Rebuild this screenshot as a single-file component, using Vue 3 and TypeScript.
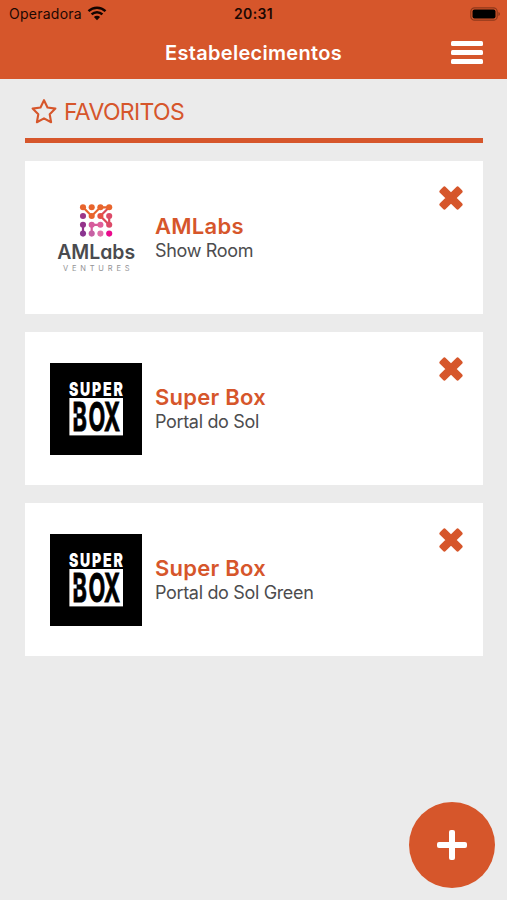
<script setup lang="ts">
interface Place {
  id: number
  name: string
  unit: string
  logo: 'amlabs' | 'superbox'
}

interface Dot {
  x: number
  y: number
  color: string
}

const places: Place[] = [
  { id: 1, name: 'AMLabs', unit: 'Show Room', logo: 'amlabs' },
  { id: 2, name: 'Super Box', unit: 'Portal do Sol', logo: 'superbox' },
  { id: 3, name: 'Super Box', unit: 'Portal do Sol Green', logo: 'superbox' },
]

const dotColors: string[][] = [
  ['#e8642c', '#e8642c', '#e8662e', '#e8642c'],
  ['#9c3687', '#e8642c', '#e55146', '#dc4a68'],
  ['#94338a', '#d65c9c', '#e0609a', '#dc4a68'],
  ['#8a3590', '#c660a4', '#e070a8', '#ea0a8c'],
]
const columns = [33, 41.7, 50.4, 59.2]
const rows = [15.3, 24, 32.8, 41.6]
const dots: Dot[] = dotColors.flatMap((line, r) =>
  line.map((color, c) => ({ x: columns[c], y: rows[r], color })),
)
</script>

<template>
  <div class="screen">
    <header class="header">
      <div class="status">
        <div class="carrier">
          <span>Operadora</span>
          <svg class="wifi" viewBox="0 0 20 15" width="20" height="15">
            <path d="M1.5 5.2a12.2 12.2 0 0 1 17 0" />
            <path d="M4.6 8.4a7.7 7.7 0 0 1 10.8 0" />
            <path class="solid" d="M10 14.2 6.9 11a4.4 4.4 0 0 1 6.2 0z" />
          </svg>
        </div>
        <span class="clock">20:31</span>
        <svg class="battery" viewBox="0 0 31 14" width="31" height="14">
          <rect class="shell" x="0.8" y="0.8" width="26.4" height="12.4" rx="3.8" />
          <rect x="2.5" y="2.5" width="23" height="9" rx="2" />
          <path class="tip" d="M28.4 5v4q1.6-.6 1.6-2t-1.6-2z" />
        </svg>
      </div>
      <div class="nav">
        <h1>Estabelecimentos</h1>
        <button class="menu" aria-label="Menu"><i /><i /><i /></button>
      </div>
    </header>

    <main>
      <h2 class="section">
        <svg viewBox="0 0 28 27" width="28" height="27">
          <path d="M14 2.2 17.5 9.5 25.4 10.6 19.7 16.2 21.1 24.2 14 20.4 6.9 24.2 8.3 16.2 2.6 10.6 10.5 9.5z" />
        </svg>
        <span>FAVORITOS</span>
      </h2>

      <article v-for="place in places" :key="place.id" class="card">
        <svg v-if="place.logo === 'amlabs'" class="logo" viewBox="0 0 92 92">
          <g class="links">
            <path stroke="#e8642c" d="M33 15.3 41.7 24 50.4 15.3H59.2" />
            <path stroke="#dc4a58" d="M59.2 15.3 50.4 24 59.2 32.8V24" />
            <path stroke="#d65c9c" d="M41.7 41.6V32.8H50.4" />
            <path stroke="#94338a" d="M33 32.8V41.6" />
          </g>
          <circle v-for="(dot, i) in dots" :key="i" :cx="dot.x" :cy="dot.y" r="3.05" :fill="dot.color" />
          <text class="am" x="7.2" y="66.5" textLength="78" lengthAdjust="spacingAndGlyphs">AMLabs</text>
          <text class="ventures" x="13" y="79.2" textLength="66.5">VENTURES</text>
        </svg>
        <svg v-else class="logo" viewBox="0 0 92 92">
          <rect width="92" height="92" fill="#000" />
          <text class="super" transform="translate(18.9 32.6) scale(0.74 1)" textLength="73">SUPER</text>
          <rect x="19.4" y="35" width="53.6" height="37.4" fill="#fff" />
          <text class="box" transform="translate(22.6 68.3) scale(0.55 1)" x="0 29 57">BOX</text>
          <rect x="22.6" y="50.5" width="4" height="4" fill="#fff" />
        </svg>
        <div class="info">
          <h3>{{ place.name }}</h3>
          <p>{{ place.unit }}</p>
        </div>
        <button class="remove" aria-label="Remover">
          <svg viewBox="0 0 24 24" width="24" height="24">
            <path d="M2.2 5.4 5.4 2.2 12 8.8 18.6 2.2 21.8 5.4 15.2 12 21.8 18.6 18.6 21.8 12 15.2 5.4 21.8 2.2 18.6 8.8 12z" />
          </svg>
        </button>
      </article>
    </main>

    <button class="add" aria-label="Adicionar">
      <svg viewBox="0 0 32 32" width="32" height="32">
        <rect x="13" y="1" width="6" height="30" rx="2" />
        <rect x="1" y="13" width="30" height="6" rx="2" />
      </svg>
    </button>
  </div>
</template>

<style>
body {
  margin: 0;
}
</style>

<style scoped>
.screen {
  position: relative;
  box-sizing: border-box;
  width: 100%;
  height: 900px;
  overflow: hidden;
  background: #ebebeb;
  color: #4c4c4e;
  font-family: Inter, 'Liberation Sans', sans-serif;
}

h1,
h2,
h3,
p {
  margin: 0;
}

button {
  padding: 0;
  border: 0;
  background: none;
}

.header {
  height: 79px;
  background: #d6562b;
}

.status {
  display: grid;
  grid-template-columns: 1fr auto 1fr;
  align-items: center;
  height: 27px;
  padding: 0 6px 0 9px;
  color: #1c0802;
  font-size: 14px;
}

.carrier {
  display: flex;
  align-items: center;
  gap: 5px;
  letter-spacing: 0.25px;
}

.wifi path {
  fill: none;
  stroke: #120400;
  stroke-width: 2.4;
}

.wifi .solid {
  fill: #120400;
  stroke: none;
}

.clock {
  margin-right: 3px;
  font-weight: 600;
  letter-spacing: 0.35px;
}

.battery {
  justify-self: end;
}

.battery .shell {
  fill: none;
  stroke: #8f381b;
  stroke-width: 1.2;
}

.battery .tip {
  fill: #8f381b;
}

.nav {
  display: grid;
  grid-template-columns: 1fr auto 1fr;
  align-items: center;
  height: 51px;
  padding: 0 24px;
}

.nav h1 {
  grid-column: 2;
  color: #fff;
  font-size: 20px;
  font-weight: 600;
  line-height: 24px;
  letter-spacing: 0.3px;
}

.menu {
  display: flex;
  flex-direction: column;
  justify-self: end;
  gap: 4px;
  width: 32px;
}

.menu i {
  height: 5px;
  border-radius: 1.5px;
  background: #fff;
}

main {
  display: flex;
  flex-direction: column;
  gap: 18px;
  padding: 0 24.5px 0 25px;
}

.section {
  display: flex;
  align-items: center;
  gap: 6px;
  box-sizing: border-box;
  height: 64px;
  padding: 6px 0 0 5px;
  border-bottom: 5px solid #d6562b;
  color: #d6562b;
  font-size: 23px;
  font-weight: 400;
  letter-spacing: -0.65px;
}

.section path {
  fill: none;
  stroke: #d6562b;
  stroke-width: 2.1;
  stroke-linejoin: round;
}

.card {
  display: flex;
  box-sizing: border-box;
  height: 153px;
  padding: 30.5px 19px 0 25px;
  background: #fff;
}

.logo {
  flex: none;
  width: 92px;
  height: 92px;
}

.links path {
  fill: none;
  stroke-width: 2.2;
}

.logo text {
  font-family: Inter, 'Liberation Sans', sans-serif;
}

.am {
  fill: #4a4b4f;
  font-size: 20px;
  font-weight: 600;
  font-feature-settings: 'cv11';
}

.ventures {
  fill: #929295;
  font-size: 7.5px;
}

.super {
  fill: #fff;
  font-size: 19px;
  font-weight: 900;
}

.box {
  fill: #000;
  stroke: #000;
  stroke-width: 1;
  font-size: 39.5px;
  font-weight: 700;
}

.info {
  flex: 1;
  padding: 21px 0 0 13px;
}

.info h3 {
  color: #d6562b;
  font-size: 22px;
  font-weight: 600;
  line-height: 27px;
  letter-spacing: 0.26px;
}

.info p {
  font-size: 18px;
  line-height: 22px;
  letter-spacing: -0.34px;
}

.remove {
  width: 26px;
  height: 24px;
  margin-top: -6px;
}

.remove svg,
.add svg {
  display: block;
  margin: auto;
}

.remove path {
  fill: #d6562b;
  stroke: #d6562b;
  stroke-width: 3.6;
  stroke-linejoin: round;
}

.add {
  position: absolute;
  right: 12px;
  bottom: 12px;
  width: 86px;
  height: 86px;
  border-radius: 50%;
  background: #d6562b;
}

.add svg {
  fill: #fff;
}
</style>
